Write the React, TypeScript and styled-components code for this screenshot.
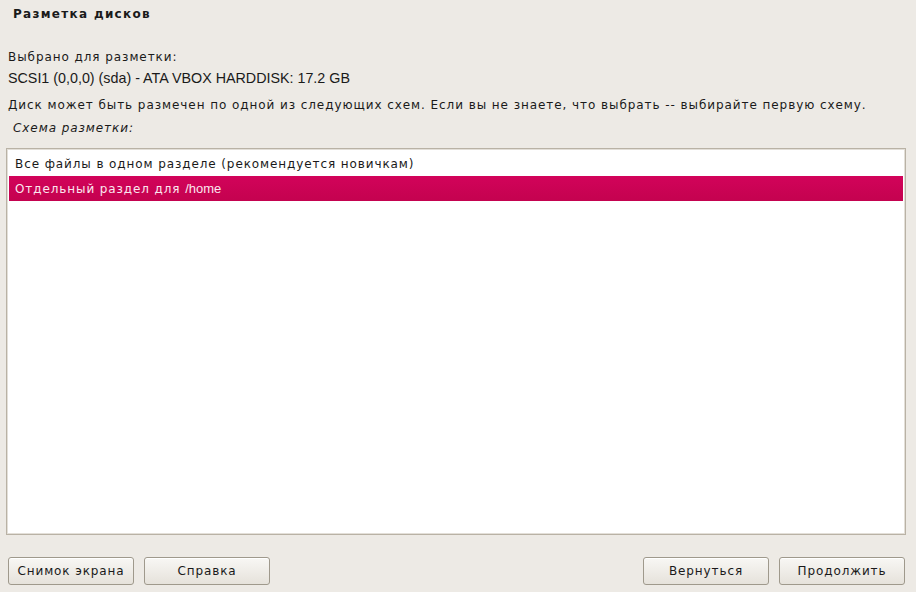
import React from "react";
import styled, { createGlobalStyle } from "styled-components";

const Global = createGlobalStyle`
  html, body { margin: 0; padding: 0; background: #edeae5; }
  body { font-family: "DejaVu Sans", sans-serif; color: #1a1a1a; }
  #root { width: 916px; height: 592px; }
`;

const Page = styled.div`
  width: 916px;
  height: 592px;
  box-sizing: border-box;
  display: flex;
  flex-direction: column;
  background: #edeae5;
`;

const Title = styled.div`
  height: 28px;
  display: flex;
  align-items: center;
  padding-left: 13px;
  font-size: 12px;
  font-weight: bold;
  letter-spacing: 1.3px;
`;

const Body = styled.div`
  flex: 1;
  display: flex;
  flex-direction: column;
  padding: 0 10px 0 6px;
`;

const Line = styled.div<{ $top: number; $indent?: number; $italic?: boolean }>`
  margin-top: ${(p) => p.$top}px;
  height: 18px;
  display: flex;
  align-items: center;
  padding-left: ${(p) => 2 + (p.$indent ?? 0)}px;
  font-size: 12px;
  letter-spacing: 0.93px;
  white-space: nowrap;
  font-style: ${(p) => (p.$italic ? "italic" : "normal")};
`;

const Latin = styled.span`
  font-family: "Liberation Sans", Arial, sans-serif;
  font-size: 14.3px;
  letter-spacing: 0;
`;

const List = styled.div`
  margin-top: 11px;
  height: 387px;
  box-sizing: border-box;
  border: 1px solid #b9b2a5;
  box-shadow: inset 0 0 0 1px #e3dfd8;
  background: #ffffff;
  padding: 2px 2px;
  display: flex;
  flex-direction: column;
`;

const Row = styled.div<{ $selected?: boolean }>`
  height: 25px;
  display: flex;
  align-items: center;
  padding-left: 6px;
  font-size: 12px;
  letter-spacing: 0.9px;
  white-space: nowrap;
  color: ${(p) => (p.$selected ? "#fbe6ee" : "#1a1a1a")};
  background: ${(p) =>
    p.$selected ? "linear-gradient(#d2035a, #c4024f)" : "transparent"};
`;

const RowLatin = styled.span`
  font-family: "Liberation Sans", Arial, sans-serif;
  font-size: 13px;
  letter-spacing: 0;
`;

const Buttons = styled.div`
  height: 56px;
  box-sizing: border-box;
  display: flex;
  align-items: flex-start;
  padding: 21px 11px 0 8px;
  gap: 10px;
`;

const Spacer = styled.div`
  flex: 1;
`;

const Button = styled.button`
  width: 126px;
  height: 28px;
  box-sizing: border-box;
  border: 1px solid #9f998c;
  border-radius: 3px;
  background: linear-gradient(#f8f7f4, #e6e2db);
  box-shadow: inset 0 1px 0 #ffffff;
  font-family: "DejaVu Sans", sans-serif;
  font-size: 12px;
  letter-spacing: 0.9px;
  color: #1a1a1a;
  padding: 0;
`;

export default function App() {
  return (
    <Page>
      <Global />
      <Title>Разметка дисков</Title>
      <Body>
        <Line $top={20}>Выбрано для разметки:</Line>
        <Line $top={3}>
          <Latin>SCSI1 (0,0,0) (sda) - ATA VBOX HARDDISK: 17.2 GB</Latin>
        </Line>
        <Line $top={9}>
          Диск может быть размечен по одной из следующих схем. Если вы не знаете, что выбрать -- выбирайте первую схему.
        </Line>
        <Line $top={5} $indent={5} $italic>
          Схема разметки:
        </Line>
        <List>
          <Row>Все файлы в одном разделе (рекомендуется новичкам)</Row>
          <Row $selected>
            Отдельный раздел для&nbsp;<RowLatin>/home</RowLatin>
          </Row>
        </List>
      </Body>
      <Buttons>
        <Button>Снимок экрана</Button>
        <Button>Справка</Button>
        <Spacer />
        <Button>Вернуться</Button>
        <Button>Продолжить</Button>
      </Buttons>
    </Page>
  );
}
